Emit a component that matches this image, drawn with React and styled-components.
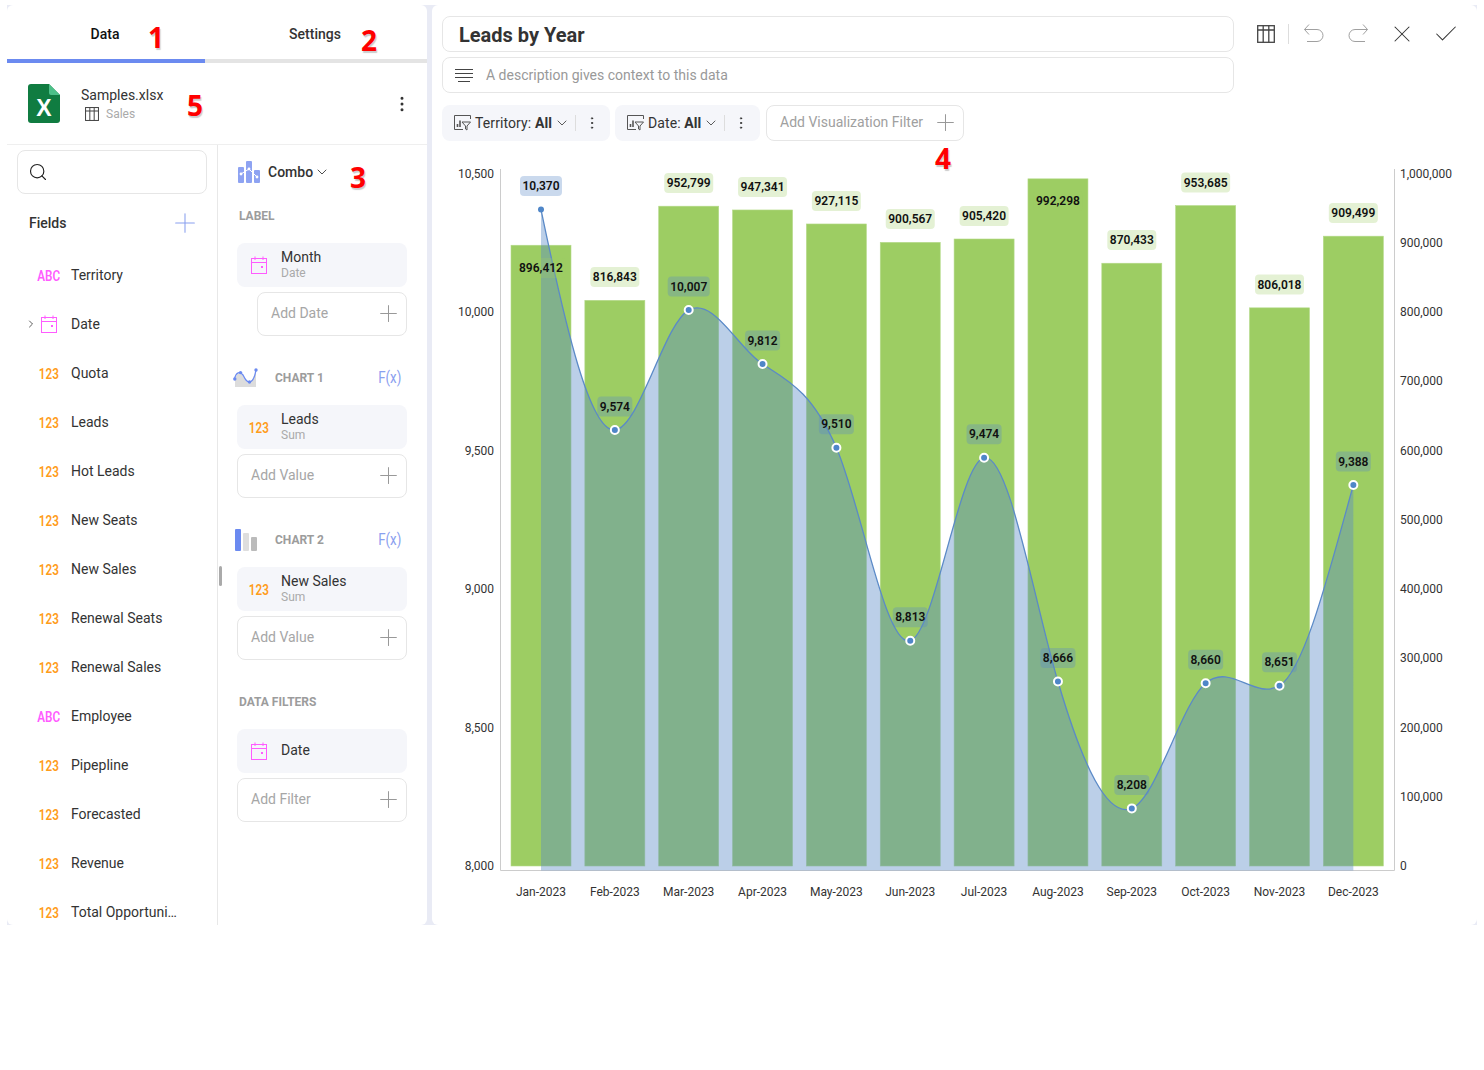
import React from "react";
import styled, { createGlobalStyle } from "styled-components";
import { Search, Plus, ChevronDown, ChevronRight, EllipsisVertical, X, Check } from "lucide-react";

const GlobalStyle = createGlobalStyle`
  html, body {
    margin: 0;
    background: #fff;
    font-family: Roboto, "Liberation Sans", sans-serif;
    color: #333;
  }
  * { box-sizing: border-box; }
`;

const Page = styled.div`
  position: relative;
  width: 1484px;
  height: 1070px;
  padding: 5px 7px;
`;

const Workspace = styled.div`
  display: flex;
  gap: 5px;
  height: 920px;
  background: #e9ebf5;
`;

const LeftPanel = styled.div`
  width: 420px;
  background: #fff;
  border-radius: 6px;
  overflow: hidden;
  display: flex;
  flex-direction: column;
`;

const Tabs = styled.div`
  display: flex;
  height: 58px;
  flex: none;
`;

const Tab = styled.div`
  width: ${(p) => p.$w}px;
  display: flex;
  align-items: center;
  justify-content: center;
  padding: 4px 2px 0 0;
  font-size: 14px;
  font-weight: 500;
  color: ${(p) => (p.$active ? "#111" : "#333")};
  border-bottom: 4px solid ${(p) => (p.$active ? "#6b8af0" : "#e4e4e4")};
`;

const FileRow = styled.div`
  flex: none;
  height: 82px;
  display: flex;
  align-items: center;
  padding: 0 15px 0 21px;
  border-bottom: 1px solid #efefef;
`;

const FileInfo = styled.div`
  margin-left: 21px;
  flex: 1;
`;

const FileName = styled.div`
  font-size: 14px;
  line-height: 18px;
  color: #333;
`;

const FileSheet = styled.div`
  display: flex;
  align-items: center;
  gap: 7px;
  margin-top: 2px;
  padding-left: 4px;
  font-size: 12px;
  line-height: 16px;
  color: #aaa;
`;

const Columns = styled.div`
  flex: 1;
  display: flex;
  min-height: 0;
`;

const FieldsColumn = styled.div`
  width: 211px;
  border-right: 1px solid #e8e8e8;
  padding-top: 5px;
  overflow: hidden;
`;

const SearchBox = styled.div`
  margin: 0 10px;
  height: 44px;
  border: 1px solid #e6e6e6;
  border-radius: 8px;
  display: flex;
  align-items: center;
  padding-left: 10px;
  color: #222;
`;

const FieldsHeader = styled.div`
  display: flex;
  align-items: center;
  justify-content: space-between;
  margin-top: 17px;
  height: 24px;
  padding: 0 16px 0 22px;
  font-size: 14px;
  font-weight: 500;
  color: #333;
`;

const FieldList = styled.div`
  margin-top: 15px;
`;

const FieldRow = styled.div`
  height: 49px;
  display: flex;
  align-items: center;
  padding-left: 18px;
  font-size: 14px;
  color: #333;
  white-space: nowrap;
`;

const ExpandSlot = styled.div`
  width: 12px;
  margin-right: 2px;
  display: flex;
  align-items: center;
  color: #333;
`;

const TypeSlot = styled.div`
  width: 20px;
  margin-right: 12px;
  display: flex;
  justify-content: center;
  align-items: center;
`;

const TypeTag = styled.span`
  display: inline-block;
  margin-top: 2px;
  font-size: 15px;
  font-weight: 600;
  line-height: 16px;
  transform: scaleX(0.78);
  color: ${(p) => (p.$kind === "ABC" ? "#ff5cff" : "#ff9c1a")};
`;

const ShelfColumn = styled.div`
  position: relative;
  flex: 1;
  padding: 0 20px 0 19px;
`;

const GrabHandle = styled.div`
  position: absolute;
  left: 1px;
  top: 421px;
  width: 3px;
  height: 20px;
  border-radius: 2px;
  background: #aaa;
`;

const ChartTypeRow = styled.div`
  display: flex;
  align-items: center;
  height: 22px;
  margin: 16px 0 0 1px;
  gap: 8px;
  font-size: 14px;
  font-weight: 500;
  color: #333;
`;

const ChartTypeName = styled.div`
  display: flex;
  align-items: center;
  gap: 1px;
`;

const SectionLabel = styled.div`
  height: 14px;
  margin-top: ${(p) => p.$top}px;
  padding-left: 2px;
  font-size: 12px;
  line-height: 14px;
  font-weight: 700;
  color: #9c9c9c;
`;

const Pill = styled.div`
  height: 44px;
  margin-top: ${(p) => p.$top || 0}px;
  display: flex;
  align-items: center;
  padding-left: 12px;
  border-radius: 8px;
  background: #f5f6fa;
`;

const PillText = styled.div`
  padding-bottom: 2px;
  font-size: 14px;
  line-height: 16px;
  color: #333;
`;

const PillSub = styled.div`
  margin: -1px 0 2px;
  font-size: 12px;
  line-height: 14px;
  color: #aaa;
`;

const AddBox = styled.div`
  height: 44px;
  margin: 5px 0 0 ${(p) => p.$indent || 0}px;
  display: flex;
  align-items: center;
  justify-content: space-between;
  padding: 0 4px 2px 13px;
  border: 1px solid #e6e6e6;
  border-radius: 8px;
  font-size: 14px;
  color: #a6a6a6;
`;

const SeriesHeader = styled.div`
  height: 24px;
  margin: 30px 0 15px -4px;
  display: flex;
  align-items: center;
  font-size: 12px;
  font-weight: 700;
  color: #9c9c9c;
`;

const SeriesName = styled.div`
  margin-left: 17px;
  flex: 1;
`;

const Fx = styled.div`
  margin: 0 2px 2px 0;
  font-size: 17px;
  font-weight: 400;
  color: #8aa0ef;
  transform: scaleX(0.78);
`;

const RightPanel = styled.div`
  flex: 1;
  background: #fff;
  border-radius: 6px;
  overflow: hidden;
  padding: 11px 10px 0;
`;

const HeaderRow = styled.div`
  display: flex;
  align-items: flex-start;
`;

const HeaderFields = styled.div`
  flex: none;
  width: 792px;
  display: flex;
  flex-direction: column;
  gap: 5px;
`;

const TitleBox = styled.div`
  height: 36px;
  display: flex;
  align-items: center;
  padding: 2px 0 0 16px;
  border: 1px solid #e6e6e6;
  border-radius: 8px;
  font-size: 20px;
  font-weight: 700;
  color: #333;
`;

const DescriptionBox = styled.div`
  height: 36px;
  display: flex;
  align-items: center;
  gap: 13px;
  padding-left: 12px;
  border: 1px solid #e6e6e6;
  border-radius: 8px;
  font-size: 14px;
  color: #999;
`;

const Toolbar = styled.div`
  display: flex;
  align-items: center;
  height: 36px;
  margin-left: 10px;
`;

const ToolButton = styled.div`
  flex: none;
  width: 44px;
  display: flex;
  justify-content: center;
  color: ${(p) => (p.$muted ? "#a0a0a0" : "#333")};
`;

const ToolDivider = styled.div`
  width: 1px;
  height: 20px;
  margin-right: 3px;
  background: #ddd;
`;

const FilterRow = styled.div`
  display: flex;
  height: 36px;
  margin-top: 12px;
`;

const FilterChip = styled.div`
  width: ${(p) => p.$w}px;
  margin-right: 5px;
  display: flex;
  align-items: center;
  padding-left: 12px;
  border-radius: 8px;
  background: #f5f6fa;
  font-size: 14px;
  color: #333;
`;

const ChipLabel = styled.span`
  margin: 0 2px 0 4px;
  letter-spacing: 0.1px;
  white-space: nowrap;
  b {
    font-weight: 700;
  }
`;

const ChipDivider = styled.div`
  width: 1px;
  height: 16px;
  margin: 0 8px 0 5px;
  background: #ddd;
`;

const AddFilter = styled.div`
  width: 198px;
  margin-left: 1px;
  display: flex;
  align-items: center;
  justify-content: space-between;
  padding: 0 4px 2px 13px;
  border: 1px solid #e6e6e6;
  border-radius: 8px;
  font-size: 14px;
  color: #a0a0a0;
`;

const ChartSvg = styled.svg`
  display: block;
  width: 1045px;
  height: 750px;
  margin: 19px 0 0 -10px;
  font-family: Roboto, "Liberation Sans", sans-serif;
`;

const AxisText = styled.text`
  font-size: 12px;
  fill: #333;
`;

const ValueText = styled.text`
  font-size: 12px;
  font-weight: 600;
  fill: #111;
`;

const Callout = styled.div`
  position: absolute;
  left: ${(p) => p.$x}px;
  top: ${(p) => p.$y}px;
  font-family: "Open Sans", "Liberation Sans", sans-serif;
  font-size: 28px;
  font-weight: 700;
  line-height: 28px;
  color: #f00;
  text-shadow: 1px 2px 1px #ccc;
`;

// chart data, everything below is in page coordinates thanks to the viewBox
const months = ["Jan", "Feb", "Mar", "Apr", "May", "Jun", "Jul", "Aug", "Sep", "Oct", "Nov", "Dec"];
const sales = [896412, 816843, 952799, 947341, 927115, 900567, 905420, 992298, 870433, 953685, 806018, 909499];
const salesLabelY = [268, 277, 183, 187, 201, 219, 216, 201, 240, 182.5, 284.5, 213];
const leads = [10370, 9574, 10007, 9812, 9510, 8813, 9474, 8666, 8208, 8660, 8651, 9388];
// tangents of the line at each point, read off the reference
const slopes = [4.8, -0.1, -0.55, 0.65, 2.3, -0.3, -0.2, 3.4, -0.4, -0.85, -0.6, -3.6];

const BASE = 866;
const PLOT_H = 692.5;
const barX = (i) => 511 + i * 73.85;
const midX = (i) => 541 + i * 73.85;
const salesY = (v) => BASE - (v / 1000000) * PLOT_H;
const leadsY = (v) => BASE - ((v - 8000) / 2500) * PLOT_H;
const fmt = (v) => v.toLocaleString("en-US");

const pointY = leads.map(leadsY);
pointY[11] = 485; // the last point sits a little lower than its value says

function linePath() {
  let d = `M${midX(0)} ${pointY[0]}`;
  for (let i = 0; i < leads.length - 1; i++) {
    const x0 = midX(i);
    const x1 = midX(i + 1);
    const dx = (x1 - x0) / 3;
    d += ` C${x0 + dx} ${pointY[i] + slopes[i] * dx} ${x1 - dx} ${pointY[i + 1] - slopes[i + 1] * dx} ${x1} ${pointY[i + 1]}`;
  }
  return d;
}

function DataLabel({ x, y, text, fill }) {
  const w = text.length * 7;
  return (
    <g>
      <rect x={x - w / 2} y={y - 10} width={w} height={20} rx={4} fill={fill} />
      <ValueText x={x} y={y + 4} textAnchor="middle">{text}</ValueText>
    </g>
  );
}

function ComboChart() {
  const line = linePath();
  const area = `${line} L${midX(11)} 870.5 L${midX(0)} 870.5 Z`;
  return (
    <ChartSvg viewBox="432 160 1045 750">
      <path d="M500.5 169V870.5H1394.5V169" fill="none" stroke="#ccc" />
      {[10500, 10000, 9500, 9000, 8500, 8000].map((v) => (
        <AxisText key={v} x={494} y={leadsY(v) + 4} textAnchor="end">{fmt(v)}</AxisText>
      ))}
      {[0, 1, 2, 3, 4, 5, 6, 7, 8, 9, 10].map((n) => (
        <AxisText key={n} x={1400} y={salesY(n * 100000) + 4}>{fmt(n * 100000)}</AxisText>
      ))}
      {sales.map((v, i) => (
        <rect key={i} x={barX(i)} y={salesY(v)} width={60} height={BASE - salesY(v)} fill="#9dcd63" stroke="#b5da8a" strokeWidth={0.6} />
      ))}
      <path d={area} fill="rgba(91,138,199,0.41)" />
      <path d={line} fill="none" stroke="#5b8ac7" strokeWidth={1.3} />
      {pointY.map((y, i) =>
        i === 0 ? (
          <circle key={i} cx={midX(i)} cy={y} r={3} fill="#4f86c8" />
        ) : (
          <circle key={i} cx={midX(i)} cy={y} r={4} fill="#4f86c8" stroke="#fff" strokeWidth={2} />
        )
      )}
      {sales.map((v, i) => (
        <DataLabel key={i} x={midX(i)} y={salesLabelY[i]} text={fmt(v)} fill="rgba(157,205,99,0.28)" />
      ))}
      {leads.map((v, i) => (
        <DataLabel key={i} x={midX(i)} y={pointY[i] - 23.5} text={fmt(v)} fill="rgba(91,138,199,0.32)" />
      ))}
      {months.map((m, i) => (
        <AxisText key={m} x={midX(i)} y={895.5} textAnchor="middle">{`${m}-2023`}</AxisText>
      ))}
    </ChartSvg>
  );
}

const ExcelIcon = () => (
  <svg width="32" height="39" viewBox="0 0 32 39">
    <path d="M3 0H21L32 11V36a3 3 0 0 1-3 3H3a3 3 0 0 1-3-3V3a3 3 0 0 1 3-3Z" fill="#107c41" />
    <path d="M21 0L32 11H23a2 2 0 0 1-2-2Z" fill="#4cc088" />
    <text x="16" y="32" textAnchor="middle" fontFamily="Liberation Sans, sans-serif" fontWeight="700" fontSize="23" fill="#fff">X</text>
  </svg>
);

const TableIcon = ({ size = 14, color = "#444" }) => (
  <svg width={size} height={size} viewBox="0 0 18 18" fill="none" stroke={color} strokeWidth="1.3">
    <rect x="0.7" y="0.7" width="16.6" height="16.6" />
    <path d="M0.7 5H17.3M6.2 0.7V17.3M11.8 0.7V17.3" />
  </svg>
);

const CalendarIcon = () => (
  <svg width="16" height="18" viewBox="0 0 16 18" fill="none" stroke="#ff5cff" strokeWidth="1">
    <rect x="0.5" y="2.5" width="15" height="15" />
    <path d="M0.5 6.5H15.5M4 0.5V4M12 0.5V4" />
    <rect x="10" y="10" width="2" height="2" fill="#ff5cff" stroke="none" />
  </svg>
);

const ComboIcon = () => (
  <svg width="22" height="22" viewBox="0 0 22 22">
    <rect x="0" y="6" width="6" height="16" rx="1" fill="#8ea3f2" />
    <rect x="8" y="0" width="6" height="22" rx="1" fill="#8ea3f2" />
    <rect x="16" y="9" width="6" height="13" rx="1" fill="#8ea3f2" />
    <path d="M3 13L11 8L19 16" fill="none" stroke="#fff" strokeWidth="1" />
    <circle cx="3" cy="13" r="1.4" fill="#fff" />
    <circle cx="11" cy="8" r="1.4" fill="#fff" />
    <circle cx="19" cy="16" r="1.4" fill="#fff" />
  </svg>
);

const SplineIcon = () => (
  <svg width="25" height="20" viewBox="0 0 25 20">
    <path d="M2 11C4 4 8 4 10 8C12 12 14 16 17 14C20 12 21 8 23 2V19H2Z" fill="#dcdcdc" stroke="none" />
    <path d="M1.5 11C3 4 7 3 10 7C12 11 14 15 17 14C20 13 22 8 23 2" fill="none" stroke="#6b8af0" strokeWidth="1.3" />
    <circle cx="1.8" cy="11" r="1.7" fill="#6b8af0" />
    <circle cx="7.5" cy="4.6" r="1.7" fill="#6b8af0" />
    <circle cx="16.5" cy="14" r="1.7" fill="#6b8af0" />
    <circle cx="23" cy="2" r="1.7" fill="#6b8af0" />
  </svg>
);

const BarsIcon = () => (
  <svg width="25" height="22" viewBox="0 0 25 22">
    <rect x="2" y="0" width="6" height="22" rx="1" fill="#6b8af0" />
    <rect x="10" y="4" width="6" height="18" rx="1" fill="#dedede" />
    <rect x="18" y="8" width="6" height="14" rx="1" fill="#bbb" />
  </svg>
);

const LinesIcon = () => (
  <svg width="18" height="15" viewBox="0 0 18 15" stroke="#444" strokeWidth="1">
    <path d="M0 1.5H18M0 5.5H18M0 9.5H18M3 13.5H15" />
  </svg>
);

const FilterIcon = () => (
  <svg width="17" height="16" viewBox="0 0 17 16" fill="none" stroke="#555" strokeWidth="1">
    <path d="M9 14.5H0.5V0.5H16.5V4" />
    <path d="M3.5 12V9M6 12V5.5" strokeWidth="1.6" />
    <path d="M8 7H16.5L13 11V15L11.5 14V11Z" />
  </svg>
);

const UndoIcon = () => (
  <svg width="20" height="20" viewBox="0 0 20 20" fill="none" stroke="currentColor" strokeWidth="1">
    <path d="M5 0.5L0.5 5.5L5 10.5M0.5 5.5H13a5.5 5.5 0 0 1 0 12H3" />
  </svg>
);

const RedoIcon = () => (
  <svg width="20" height="20" viewBox="0 0 20 20" fill="none" stroke="currentColor" strokeWidth="1">
    <path d="M15 0.5L19.5 5.5L15 10.5M19.5 5.5H7a5.5 5.5 0 0 0 0 12H17" />
  </svg>
);

const fields = [
  ["ABC", "Territory"],
  ["DATE", "Date"],
  ["123", "Quota"],
  ["123", "Leads"],
  ["123", "Hot Leads"],
  ["123", "New Seats"],
  ["123", "New Sales"],
  ["123", "Renewal Seats"],
  ["123", "Renewal Sales"],
  ["ABC", "Employee"],
  ["123", "Pipepline"],
  ["123", "Forecasted"],
  ["123", "Revenue"],
  ["123", "Total Opportuni…"],
];

const AddPlus = () => <Plus size={27} strokeWidth={0.9} color="#999" />;

function TypeMark({ kind }) {
  return (
    <TypeSlot>
      {kind === "DATE" ? <CalendarIcon /> : <TypeTag $kind={kind}>{kind}</TypeTag>}
    </TypeSlot>
  );
}

export default function App() {
  return (
    <Page>
      <GlobalStyle />
      <Workspace>
        <LeftPanel>
          <Tabs>
            <Tab $w={198} $active>Data</Tab>
            <Tab $w={222}>Settings</Tab>
          </Tabs>
          <FileRow>
            <ExcelIcon />
            <FileInfo>
              <FileName>Samples.xlsx</FileName>
              <FileSheet>
                <TableIcon />
                Sales
              </FileSheet>
            </FileInfo>
            <EllipsisVertical size={20} strokeWidth={1.6} color="#333" />
          </FileRow>
          <Columns>
            <FieldsColumn>
              <SearchBox>
                <Search size={20} strokeWidth={1.4} />
              </SearchBox>
              <FieldsHeader>
                Fields
                <Plus size={32} strokeWidth={0.8} color="#8aa0ef" />
              </FieldsHeader>
              <FieldList>
                {fields.map(([kind, name]) => (
                  <FieldRow key={name}>
                    <ExpandSlot>
                      {kind === "DATE" && <ChevronRight size={12} strokeWidth={1.6} />}
                    </ExpandSlot>
                    <TypeMark kind={kind} />
                    {name}
                  </FieldRow>
                ))}
              </FieldList>
            </FieldsColumn>
            <ShelfColumn>
              <GrabHandle />
              <ChartTypeRow>
                <ComboIcon />
                <ChartTypeName>
                  Combo
                  <ChevronDown size={16} strokeWidth={1.3} />
                </ChartTypeName>
              </ChartTypeRow>

              <SectionLabel $top={26}>LABEL</SectionLabel>
              <Pill $top={20}>
                <TypeMark kind="DATE" />
                <div>
                  <PillText>Month</PillText>
                  <PillSub>Date</PillSub>
                </div>
              </Pill>
              <AddBox $indent={20}>
                Add Date
                <AddPlus />
              </AddBox>

              <SeriesHeader>
                <SplineIcon />
                <SeriesName>CHART 1</SeriesName>
                <Fx>F(x)</Fx>
              </SeriesHeader>
              <Pill>
                <TypeMark kind="123" />
                <div>
                  <PillText>Leads</PillText>
                  <PillSub>Sum</PillSub>
                </div>
              </Pill>
              <AddBox>
                Add Value
                <AddPlus />
              </AddBox>

              <SeriesHeader>
                <BarsIcon />
                <SeriesName>CHART 2</SeriesName>
                <Fx>F(x)</Fx>
              </SeriesHeader>
              <Pill>
                <TypeMark kind="123" />
                <div>
                  <PillText>New Sales</PillText>
                  <PillSub>Sum</PillSub>
                </div>
              </Pill>
              <AddBox>
                Add Value
                <AddPlus />
              </AddBox>

              <SectionLabel $top={35}>DATA FILTERS</SectionLabel>
              <Pill $top={20}>
                <TypeMark kind="DATE" />
                <PillText>Date</PillText>
              </Pill>
              <AddBox>
                Add Filter
                <AddPlus />
              </AddBox>
            </ShelfColumn>
          </Columns>
        </LeftPanel>

        <RightPanel>
          <HeaderRow>
            <HeaderFields>
              <TitleBox>Leads by Year</TitleBox>
              <DescriptionBox>
                <LinesIcon />
                A description gives context to this data
              </DescriptionBox>
            </HeaderFields>
            <Toolbar>
              <ToolButton>
                <TableIcon size={18} />
              </ToolButton>
              <ToolDivider />
              <ToolButton $muted><UndoIcon /></ToolButton>
              <ToolButton $muted><RedoIcon /></ToolButton>
              <ToolButton><X size={28} strokeWidth={0.9} /></ToolButton>
              <ToolButton><Check size={28} strokeWidth={0.9} /></ToolButton>
            </Toolbar>
          </HeaderRow>
          <FilterRow>
            <FilterChip $w={168}>
              <FilterIcon />
              <ChipLabel>Territory: <b>All</b></ChipLabel>
              <ChevronDown size={16} strokeWidth={1.2} />
              <ChipDivider />
              <EllipsisVertical size={16} strokeWidth={1.5} />
            </FilterChip>
            <FilterChip $w={145}>
              <FilterIcon />
              <ChipLabel>Date: <b>All</b></ChipLabel>
              <ChevronDown size={16} strokeWidth={1.2} />
              <ChipDivider />
              <EllipsisVertical size={16} strokeWidth={1.5} />
            </FilterChip>
            <AddFilter>
              Add Visualization Filter
              <AddPlus />
            </AddFilter>
          </FilterRow>
          <ComboChart />
        </RightPanel>
      </Workspace>

      <Callout $x={148} $y={23}>1</Callout>
      <Callout $x={361} $y={26}>2</Callout>
      <Callout $x={350} $y={163}>3</Callout>
      <Callout $x={935} $y={144}>4</Callout>
      <Callout $x={187} $y={91}>5</Callout>
    </Page>
  );
}
